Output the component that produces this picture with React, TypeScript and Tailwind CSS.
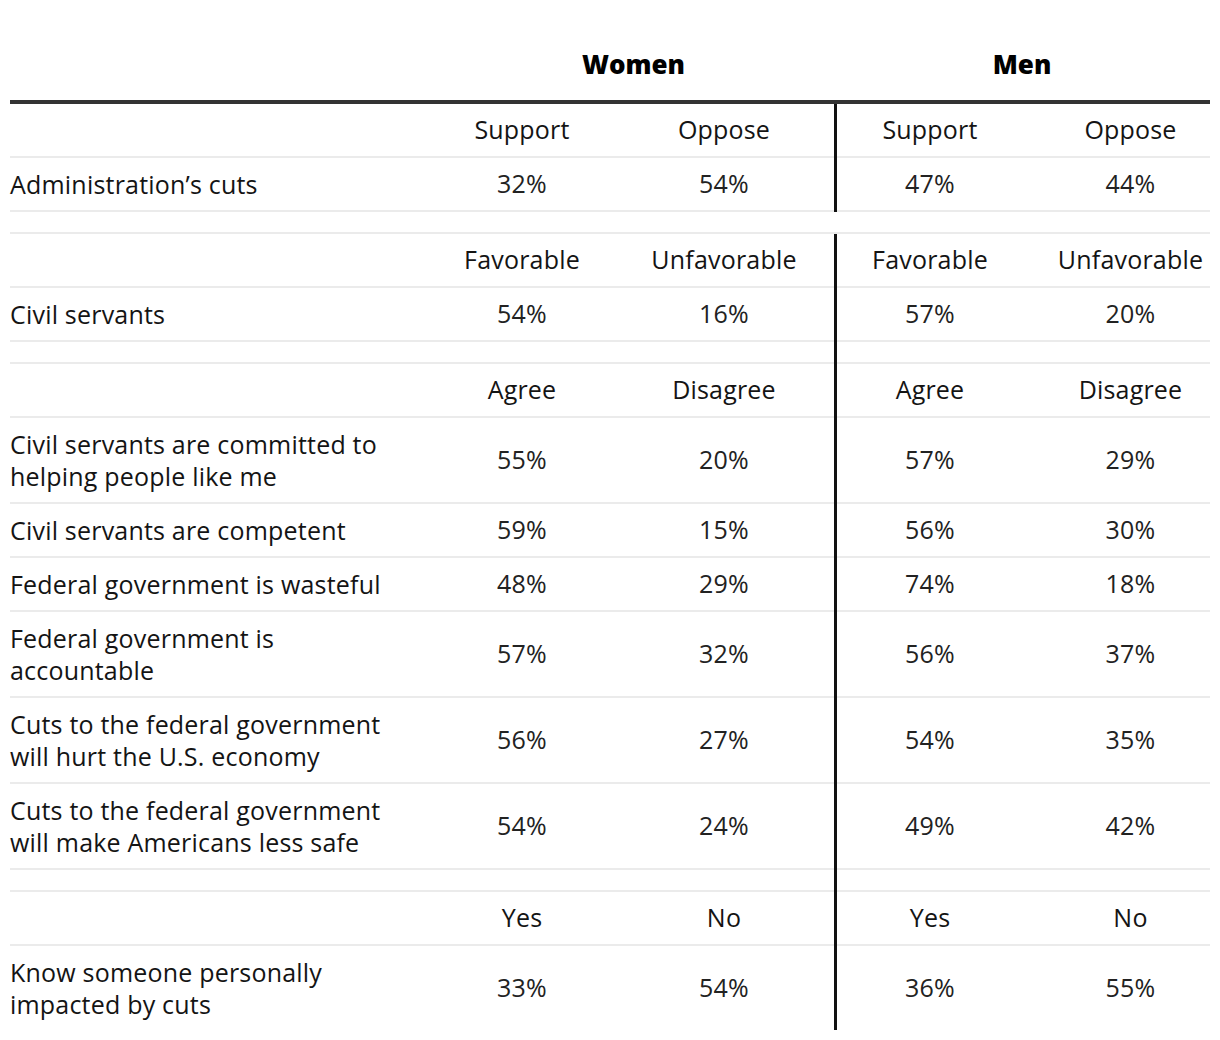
type Row = { label: string; tall?: boolean; v: string[] };
type Block = { head: string[]; rows: Row[] };

const blocks: Block[] = [
  {
    head: ["Support", "Oppose", "Support", "Oppose"],
    rows: [{ label: "Administration’s cuts", v: ["32%", "54%", "47%", "44%"] }],
  },
  {
    head: ["Favorable", "Unfavorable", "Favorable", "Unfavorable"],
    rows: [{ label: "Civil servants", v: ["54%", "16%", "57%", "20%"] }],
  },
  {
    head: ["Agree", "Disagree", "Agree", "Disagree"],
    rows: [
      { label: "Civil servants are committed to\nhelping people like me", tall: true, v: ["55%", "20%", "57%", "29%"] },
      { label: "Civil servants are competent", v: ["59%", "15%", "56%", "30%"] },
      { label: "Federal government is wasteful", v: ["48%", "29%", "74%", "18%"] },
      { label: "Federal government is\naccountable", tall: true, v: ["57%", "32%", "56%", "37%"] },
      { label: "Cuts to the federal government\nwill hurt the U.S. economy", tall: true, v: ["56%", "27%", "54%", "35%"] },
      { label: "Cuts to the federal government\nwill make Americans less safe", tall: true, v: ["54%", "24%", "49%", "42%"] },
    ],
  },
  {
    head: ["Yes", "No", "Yes", "No"],
    rows: [{ label: "Know someone personally\nimpacted by cuts", tall: true, v: ["33%", "54%", "36%", "55%"] }],
  },
];

function rowClass(tall?: boolean, last?: boolean) {
  if (last) return "h-[84px]";
  return tall ? "h-[86px] border-b-2 border-[#ebebeb]" : "h-[54px] border-b-2 border-[#ebebeb]";
}

function Spacer() {
  return <div className="h-[22px] border-b-2 border-[#ebebeb]" />;
}

export default function App() {
  const flat: { kind: "head" | "row" | "gap"; block: number; row?: Row; last?: boolean }[] = [];
  blocks.forEach((b, i) => {
    if (i > 0) flat.push({ kind: "gap", block: i });
    flat.push({ kind: "head", block: i });
    b.rows.forEach((r, j) =>
      flat.push({ kind: "row", block: i, row: r, last: i === blocks.length - 1 && j === b.rows.length - 1 })
    );
  });

  const first = flat.filter((x) => x.block === 0);
  const rest = flat.filter((x) => x.block > 0).slice(1);

  const left = (items: typeof flat) =>
    items.map((it, k) => {
      if (it.kind === "gap") return <Spacer key={k} />;
      if (it.kind === "head") {
        const h = blocks[it.block].head;
        return (
          <div key={k} className={`grid grid-cols-[411px_202px_211px] items-center ${rowClass()}`}>
            <div />
            <div className="text-center">{h[0]}</div>
            <div className="pr-[9px] text-center">{h[1]}</div>
          </div>
        );
      }
      const r = it.row!;
      return (
        <div key={k} className={`grid grid-cols-[411px_202px_211px] items-center ${rowClass(r.tall, it.last)}`}>
          <div className="whitespace-pre-line leading-[32px]">{r.label}</div>
          <div className="text-center text-[#222]">{r.v[0]}</div>
          <div className="pr-[9px] text-center text-[#222]">{r.v[1]}</div>
        </div>
      );
    });

  const right = (items: typeof flat) =>
    items.map((it, k) => {
      if (it.kind === "gap") return <Spacer key={k} />;
      if (it.kind === "head") {
        const h = blocks[it.block].head;
        return (
          <div key={k} className={`grid grid-cols-[186px_187px] items-center ${rowClass()}`}>
            <div className="text-center">{h[2]}</div>
            <div className="pl-[28px] text-center">{h[3]}</div>
          </div>
        );
      }
      const r = it.row!;
      return (
        <div key={k} className={`grid grid-cols-[186px_187px] items-center ${rowClass(r.tall, it.last)}`}>
          <div className="text-center text-[#222]">{r.v[2]}</div>
          <div className="pl-[28px] text-center text-[#222]">{r.v[3]}</div>
        </div>
      );
    });

  return (
    <div className="min-h-[1040px] bg-white px-[10px] font-['Open_Sans',_'Liberation_Sans',_sans-serif] text-[25px] tracking-[0.2px] text-[#141414]">
      <div className="w-[1200px]">
        {/* group headers */}
        <div className="flex h-[104px] items-end border-b-4 border-[#333333] pb-[20px] text-[26px] font-extrabold leading-[32px] tracking-normal text-black">
          <div className="w-[411px]" />
          <div className="w-[413px] pl-[12px] text-center">Women</div>
          <div className="w-[376px] text-center">Men</div>
        </div>

        <div className="flex">
          <div className="w-[824px]">{left(first)}</div>
          <div className="w-[376px] border-l-[3px] border-[#111111]">{right(first)}</div>
        </div>

        <Spacer />

        <div className="flex">
          <div className="w-[824px]">{left(rest)}</div>
          <div className="w-[376px] border-l-[3px] border-[#111111]">{right(rest)}</div>
        </div>
      </div>
    </div>
  );
}
